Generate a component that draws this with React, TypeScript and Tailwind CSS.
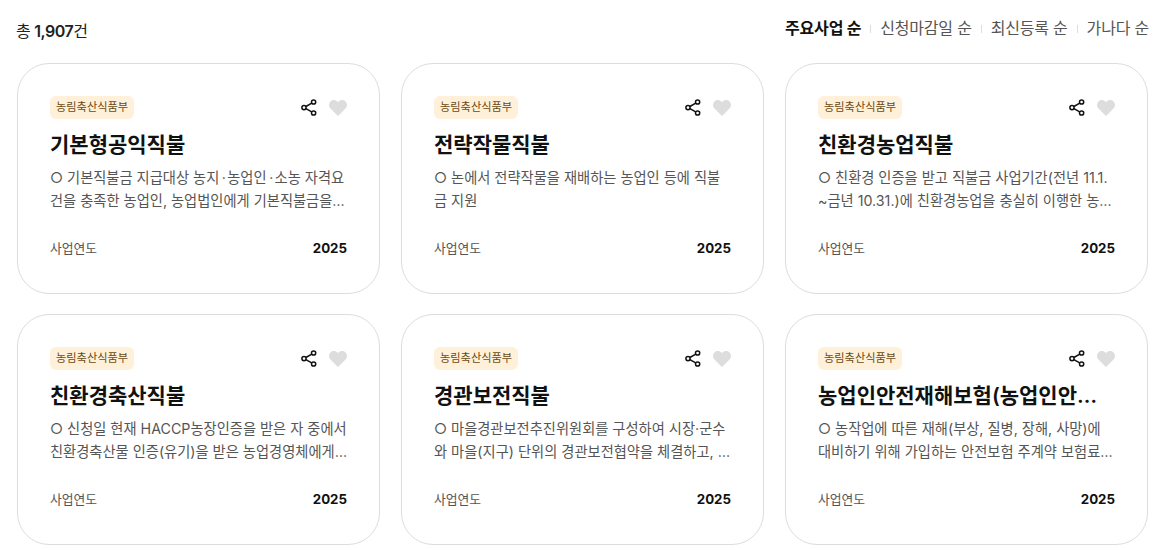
const font = { fontFamily: '"Inter", "Noto Sans CJK KR", sans-serif' };

const cards = [
  ["기본형공익직불", "○ 기본직불금 지급대상 농지\u2009‧\u200a농업인\u2009‧\u200a소농 자격요건을 충족한 농업인, 농업법인에게 기본직불금을 지급하여 농업인의 소득안정을 도모합니다"],
  ["전략작물직불", "○ 논에서 전략작물을 재배하는 농업인 등에 직불금 지원"],
  ["친환경농업직불", "○ 친환경 인증을 받고 직불금 사업기간(전년 11.1. ~금년 10.31.)에 친환경농업을 충실히 이행한 농업인에게 직불금을 지급합니다"],
  ["친환경축산직불", "○ 신청일 현재 HACCP농장인증을 받은 자 중에서 친환경축산물 인증(유기)을 받은 농업경영체에게 직불금을 지급하여 지원합니다"],
  ["경관보전직불", "○ 마을경관보전추진위원회를 구성하여 시장·군수와 마을(지구) 단위의 경관보전협약을 체결하고, 경관작물을 재배하는 농업인에게 지원합니다"],
  ["농업인안전재해보험(농업인안전보험)", "○ 농작업에 따른 재해(부상, 질병, 장해, 사망)에 대비하기 위해 가입하는 안전보험 주계약 보험료를 국가와 지자체가 지원합니다"],
];

function Card({ title, desc }: { title: string; desc: string }) {
  return (
    <div className="h-[231px] rounded-[32px] border border-[#dddddd] bg-white px-[32px] pt-[32px] flex flex-col">
      <div className="flex items-center justify-between h-[23px]">
        <span className="h-[23px] flex items-center rounded-[6px] bg-[#fff1d9] px-[6px] text-[11.2px] text-[#6b4a12]">
          농림축산식품부
        </span>
        <div className="flex items-center gap-[12px]">
          <svg width="16" height="17" viewBox="0 0 16 17" fill="none" stroke="#111111" strokeWidth="1.5">
            <circle cx="12.6" cy="3" r="2.1" />
            <circle cx="3" cy="8.6" r="2.1" />
            <circle cx="12.6" cy="14" r="2.1" />
            <path d="M4.9 7.5 10.7 4.1M4.9 9.7l5.8 3.2" />
          </svg>
          <svg width="18" height="16" viewBox="0 0 18 16" fill="#dddddd">
            <path d="M9 16 1.5 8.6C-.5 6.5-.4 3.2 1.5 1.4 3.5-.5 6.7-.4 8.5 1.6l.5.6.5-.6c1.8-2 5-2.1 7-.2 1.9 1.8 2 5.1 0 7.2L9 16Z" />
          </svg>
        </div>
      </div>
      <h3 className="mt-[12px] h-[28px] truncate text-[21px] leading-[28px] font-semibold text-[#111111]">
        {title}
      </h3>
      <p className="mt-[7px] h-[46px] line-clamp-2 text-[14.25px] leading-[23px] text-[#555555] break-all">{desc}</p>
      <div className="mt-[25px] flex items-center justify-between h-[24px]">
        <span className="text-[12.8px] text-[#555555]">사업연도</span>
        <span className="text-[13.3px] font-bold text-[#111111]">2025</span>
      </div>
    </div>
  );
}

export default function App() {
  return (
    <div className="w-[1154px] h-[550px] overflow-hidden bg-white" style={font}>
      <div className="h-[63px] pl-[16px] pr-[5px] flex justify-between">
        <div className="pt-[20px] text-[16px] leading-[22px] tracking-[-0.5px] text-[#222222]">
          총 <span className="font-semibold">1,907</span>건
        </div>
        <div className="pt-[17px] flex items-start text-[16px] tracking-[-0.2px] leading-[22px] text-[#555555]">
          <span className="font-bold text-[#111111]">주요사업 순</span>
          <span className="mx-[9px] mt-[8px] h-[8px] w-px bg-[#dddddd]" />
          <span>신청마감일 순</span>
          <span className="mx-[9px] mt-[8px] h-[8px] w-px bg-[#dddddd]" />
          <span>최신등록 순</span>
          <span className="mx-[9px] mt-[8px] h-[8px] w-px bg-[#dddddd]" />
          <span>가나다 순</span>
        </div>
      </div>
      <div className="pl-[17px] w-[1148px] grid grid-cols-3 gap-x-[21px] gap-y-[20px]">
        {cards.map(([t, d]) => (
          <Card key={t} title={t} desc={d} />
        ))}
      </div>
    </div>
  );
}
